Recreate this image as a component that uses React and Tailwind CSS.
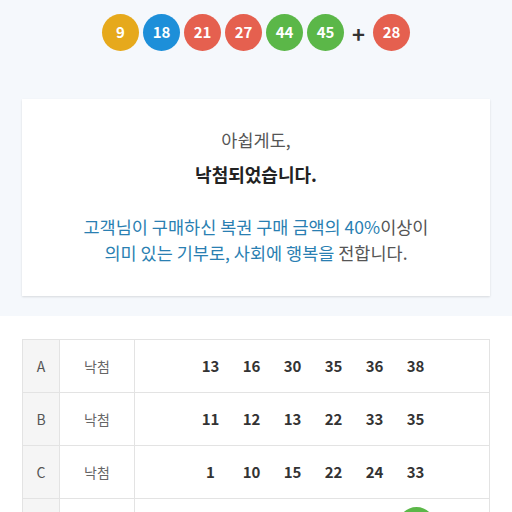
const balls = [
  { n: 9, c: 'bg-[#e6a91c]' },
  { n: 18, c: 'bg-[#1d8fd9]' },
  { n: 21, c: 'bg-[#e5604f]' },
  { n: 27, c: 'bg-[#e5604f]' },
  { n: 44, c: 'bg-[#5bb748]' },
  { n: 45, c: 'bg-[#5bb748]' },
]

const rows = [
  { id: 'A', result: '낙첨', nums: [13, 16, 30, 35, 36, 38] },
  { id: 'B', result: '낙첨', nums: [11, 12, 13, 22, 33, 35] },
  { id: 'C', result: '낙첨', nums: [1, 10, 15, 22, 24, 33] },
]

const Ball = ({ n, c }) => (
  <div className={`w-[37px] h-[37px] rounded-full ${c} flex items-center justify-center text-white text-[15px] font-semibold`}>
    {n}
  </div>
)

export default function App() {
  return (
    <div className="w-[512px] h-[512px] overflow-hidden bg-white" style={{ fontFamily: '"Noto Sans CJK KR", "Noto Sans", sans-serif' }}>
      <div className="bg-[#f5f8fc] pt-[14px] pb-[20px]">
        <div className="flex items-center justify-center gap-[4px]">
          {balls.map((b) => <Ball key={b.n} {...b} />)}
          <span className="w-[21px] text-center text-[22px] font-semibold text-[#333] leading-none">+</span>
          <Ball n={28} c="bg-[#e5604f]" />
        </div>

        <div className="mx-[22px] mt-[48px] bg-white shadow-[0_1px_2px_rgba(0,0,0,0.12)] pt-[27px] pb-[30px] text-center">
          <p className="text-[17.5px] text-[#555] leading-[28px]">아쉽게도,</p>
          <p className="mt-[6px] text-[18px] font-bold text-[#222] leading-[28px]">낙첨되었습니다.</p>
          <div className="mt-[26px] text-[17.5px] leading-[26px] text-[#2a7fb2]">
            <p>고객님이 구매하신 복권 구매 금액의 40%<span className="text-[#555]">이상이</span></p>
            <p>의미 있는 기부로, 사회에 행복을 <span className="text-[#555]">전합니다.</span></p>
          </div>
        </div>
      </div>

      <div className="mx-[22px] mt-[23px] border-t border-l border-[#e3e3e3]">
        {[...rows, { id: 'D', result: '', nums: [] }].map((r) => (
          <div key={r.id} className="flex h-[53px] border-b border-[#e3e3e3]">
            <div className="w-[37px] bg-[#f5f5f5] border-r border-[#e3e3e3] flex items-center justify-center text-[14px] text-[#555]">
              {r.id !== 'D' && r.id}
            </div>
            <div className="w-[75px] border-r border-[#e3e3e3] flex items-center justify-center text-[14px] text-[#666]">
              {r.result}
            </div>
            <div className="flex-1 border-r border-[#e3e3e3] flex items-center pl-[55px]">
              {r.id === 'D' ? (
                <div className="self-start ml-[208px] mt-[8px] w-[37px] h-[37px] rounded-full bg-[#5bb748]" />
              ) : (
                r.nums.map((n, i) => (
                  <span key={i} className="w-[41px] text-center text-[15px] font-semibold text-[#333]">{n}</span>
                ))
              )}
            </div>
          </div>
        ))}
      </div>
    </div>
  )
}
